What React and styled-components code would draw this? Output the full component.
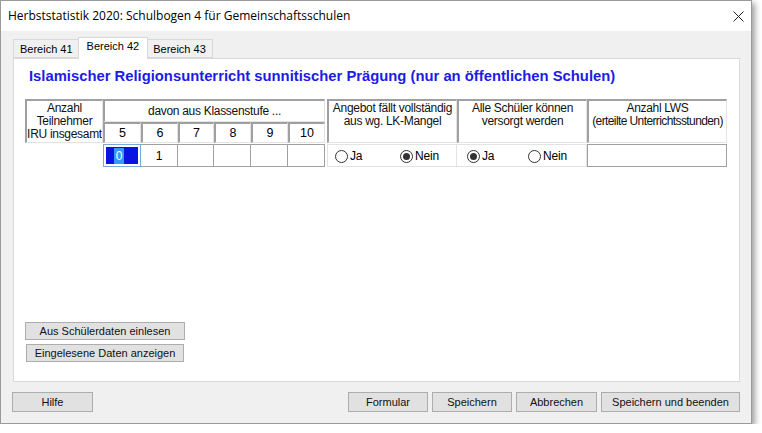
import React from "react";
import styled, { createGlobalStyle } from "styled-components";

const GlobalStyle = createGlobalStyle`
  html, body {
    margin: 0;
    padding: 0;
    background: #ffffff;
  }
  body {
    font-family: "Liberation Sans", Arial, sans-serif;
    font-size: 11px;
    color: #000;
  }
`;

const klassen = ["5", "6", "7", "8", "9", "10"];
const werte = ["0", "1", "", "", "", ""];

const App = () => {
  return (
    <>
      <GlobalStyle />
      <Window>
        <TitleBar>
          <Title>Herbststatistik 2020: Schulbogen 4 für Gemeinschaftsschulen</Title>
          <CloseButton>
            <svg width="11" height="11" viewBox="0 0 11 11">
              <path d="M0.5 0.5 L10.5 10.5 M10.5 0.5 L0.5 10.5" stroke="#222" strokeWidth="1" fill="none" />
            </svg>
          </CloseButton>
        </TitleBar>
        <Body>
          <Tabs>
            <Tab>Bereich 41</Tab>
            <Tab active>Bereich 42</Tab>
            <Tab>Bereich 43</Tab>
          </Tabs>
          <Panel>
            <Heading>
              Islamischer Religionsunterricht sunnitischer Prägung (nur an öffentlichen Schulen)
            </Heading>
            <HeaderGrid>
              <HeadCell col="1" rows={2} align="center">
                Anzahl
                <br />
                Teilnehmer
                <br />
                IRU insgesamt
              </HeadCell>
              <HeadCell col="2 / span 6" rows={1} align="center">
                davon aus Klassenstufe ...
              </HeadCell>
              {klassen.map((k, i) => (
                <NumCell key={k} col={i + 2}>
                  {k}
                </NumCell>
              ))}
              <HeadCell col="9" rows={2}>
                Angebot fällt vollständig
                <br />
                aus wg. LK-Mangel
              </HeadCell>
              <HeadCell col="10" rows={2}>
                Alle Schüler können
                <br />
                versorgt werden
              </HeadCell>
              <HeadCell col="11" rows={2}>
                Anzahl LWS
                <br />
                <Small>(erteilte Unterrichtsstunden)</Small>
              </HeadCell>
            </HeaderGrid>
            <DataGrid>
              {werte.map((w, i) =>
                i === 0 ? (
                  <SelectedCell key={i} col={i + 2}>
                    <Highlight>
                      <span>{w}</span>
                    </Highlight>
                  </SelectedCell>
                ) : (
                  <InputCell key={i} col={i + 2}>
                    {w}
                  </InputCell>
                )
              )}
              <RadioGroup col={9}>
                <RadioOption w={65}>
                  <Radio />
                  Ja
                </RadioOption>
                <RadioOption>
                  <Radio checked />
                  Nein
                </RadioOption>
              </RadioGroup>
              <RadioGroup col={10}>
                <RadioOption w={61}>
                  <Radio checked />
                  Ja
                </RadioOption>
                <RadioOption>
                  <Radio />
                  Nein
                </RadioOption>
              </RadioGroup>
              <InputCell col={11} />
            </DataGrid>
            <Spacer />
            <PanelButtons>
              <Button w={160}>Aus Schülerdaten einlesen</Button>
              <Button w={158} style={{ marginLeft: 1 }}>
                Eingelesene Daten anzeigen
              </Button>
            </PanelButtons>
          </Panel>
          <Footer>
            <Button w={81} h={20}>
              Hilfe
            </Button>
            <FooterRight>
              <Button w={80} h={20}>
                Formular
              </Button>
              <Button w={80} h={20}>
                Speichern
              </Button>
              <Button w={81} h={20}>
                Abbrechen
              </Button>
              <Button w={139} h={20}>
                Speichern und beenden
              </Button>
            </FooterRight>
          </Footer>
        </Body>
      </Window>
    </>
  );
};

export default App;

const Window = styled.div`
  width: 752px;
  height: 424px;
  box-sizing: border-box;
  border: 1px solid #9a9a9a;
  background: #f0f0f0;
  box-shadow: 3px 3px 6px rgba(0, 0, 0, 0.38);
  display: flex;
  flex-direction: column;
  overflow: hidden;
`;

const TitleBar = styled.div`
  height: 30px;
  background: #ffffff;
  display: flex;
  align-items: center;
  justify-content: space-between;
  padding: 0 0 0 7px;
`;

const Title = styled.div`
  font-family: "Open Sans", "Noto Sans", sans-serif;
  font-size: 12px;
  color: #000;
  padding-bottom: 1px;
`;

const CloseButton = styled.div`
  width: 26px;
  height: 30px;
  display: flex;
  align-items: center;
  justify-content: center;
`;

const Body = styled.div`
  flex: 1;
  display: flex;
  flex-direction: column;
  padding: 6px 11px 0 12px;
`;

const Tabs = styled.div`
  display: flex;
  align-items: flex-end;
  height: 21px;
`;

const Tab = styled.div`
  height: ${(p) => (p.active ? "22px" : "19px")};
  box-sizing: border-box;
  padding: ${(p) => (p.active ? "2px 8px 0 8px" : "3px 6px 0 6px")};
  margin: ${(p) => (p.active ? "0 -2px -1px -2px" : "0")};
  border: 1px solid #d9d9d9;
  border-bottom: ${(p) => (p.active ? "none" : "1px solid #d9d9d9")};
  background: ${(p) => (p.active ? "#ffffff" : "#f0f0f0")};
  font-size: 11px;
  white-space: nowrap;
  position: relative;
  z-index: ${(p) => (p.active ? 2 : 1)};
`;

const Panel = styled.div`
  height: 324px;
  box-sizing: border-box;
  background: #ffffff;
  border: 1px solid #d9d9d9;
  display: flex;
  flex-direction: column;
  padding: 8px 0 19px 11px;
`;

const Heading = styled.div`
  font-family: "Liberation Sans", Arial, sans-serif;
  font-weight: bold;
  font-size: 14.8px;
  color: #1c1ce6;
  padding-left: 4px;
  height: 22px;
  line-height: 18px;
  margin-bottom: 10px;
`;

const columns = "78px 38px 37px 36px 37px 37px 37px 2px 130px 130px 140px";

const HeaderGrid = styled.div`
  display: grid;
  grid-template-columns: ${columns};
  grid-template-rows: 23px 21px;
`;

const HeadCell = styled.div`
  grid-column: ${(p) => p.col};
  grid-row: 1 / span ${(p) => p.rows};
  box-sizing: border-box;
  border-top: 2px solid #a0a0a0;
  border-left: 2px solid #a0a0a0;
  border-right: 1px solid #e3e3e3;
  border-bottom: 1px solid #e3e3e3;
  background: #ffffff;
  font-size: 12px;
  line-height: 13px;
  text-align: center;
  letter-spacing: -0.3px;
  color: #111;
  display: flex;
  flex-direction: column;
  justify-content: ${(p) => (p.align === "center" ? "center" : "flex-start")};
  align-items: center;
  padding-top: ${(p) => (p.align === "center" ? "0" : "1px")};
  overflow: hidden;
  white-space: nowrap;
`;

const Small = styled.span`
  letter-spacing: -0.6px;
`;

const NumCell = styled.div`
  grid-column: ${(p) => p.col};
  grid-row: 2;
  box-sizing: border-box;
  border-top: 2px solid #a0a0a0;
  border-left: 2px solid #a0a0a0;
  border-right: 1px solid #e3e3e3;
  border-bottom: 1px solid #e3e3e3;
  background: #ffffff;
  font-size: 12.5px;
  display: flex;
  align-items: center;
  justify-content: center;
`;

const DataGrid = styled.div`
  display: grid;
  grid-template-columns: ${columns};
  grid-template-rows: 23px;
  margin-top: 1px;
`;

const InputCell = styled.div`
  grid-column: ${(p) => p.col};
  grid-row: 1;
  box-sizing: border-box;
  border: 1px solid #a0a0a0;
  border-left-width: ${(p) => (p.col === 11 ? "1px" : "0")};
  background: #ffffff;
  font-size: 12px;
  display: flex;
  align-items: center;
  justify-content: center;
`;

const SelectedCell = styled.div`
  grid-column: ${(p) => p.col};
  grid-row: 1;
  box-sizing: border-box;
  border: 1px solid #7aa7e0;
  padding: 2px;
  background: #ffffff;
  display: flex;
`;

const Highlight = styled.div`
  flex: 1;
  background: #0a14e0;
  display: flex;
  align-items: center;
  justify-content: center;
  font-size: 12px;
  color: #ffffff;
  span {
    background: #3399ff;
    padding: 1px 2px;
    margin-left: -6px;
  }
`;

const RadioGroup = styled.div`
  grid-column: ${(p) => p.col};
  grid-row: 1;
  box-sizing: border-box;
  border: 1px solid #e3e3e3;
  border-left-width: ${(p) => (p.col === 9 ? "1px" : "0")};
  background: #ffffff;
  display: flex;
  align-items: center;
  padding-left: ${(p) => (p.col === 9 ? "7px" : "10px")};
`;

const RadioOption = styled.div`
  width: ${(p) => (p.w ? `${p.w}px` : "auto")};
  display: flex;
  align-items: center;
  gap: 2px;
  font-size: 12px;
  letter-spacing: -0.2px;
  padding-top: 1px;
`;

const Radio = styled.span`
  width: 13px;
  height: 13px;
  box-sizing: border-box;
  border-radius: 50%;
  border: 1px solid #333333;
  background: #ffffff;
  display: inline-flex;
  align-items: center;
  justify-content: center;
  &::after {
    content: "";
    width: 7px;
    height: 7px;
    border-radius: 50%;
    background: #333333;
    display: ${(p) => (p.checked ? "block" : "none")};
  }
`;

const Spacer = styled.div`
  flex: 1;
`;

const PanelButtons = styled.div`
  display: flex;
  flex-direction: column;
  gap: 4px;
`;

const Button = styled.div`
  width: ${(p) => p.w}px;
  height: ${(p) => p.h || 18}px;
  box-sizing: border-box;
  border: 1px solid #adadad;
  background: #e1e1e1;
  font-size: 11px;
  color: #111;
  display: flex;
  align-items: center;
  justify-content: center;
  white-space: nowrap;
`;

const Footer = styled.div`
  display: flex;
  justify-content: space-between;
  align-items: center;
  height: 40px;
  margin-left: -1px;
`;

const FooterRight = styled.div`
  display: flex;
  gap: 4px;
`;
